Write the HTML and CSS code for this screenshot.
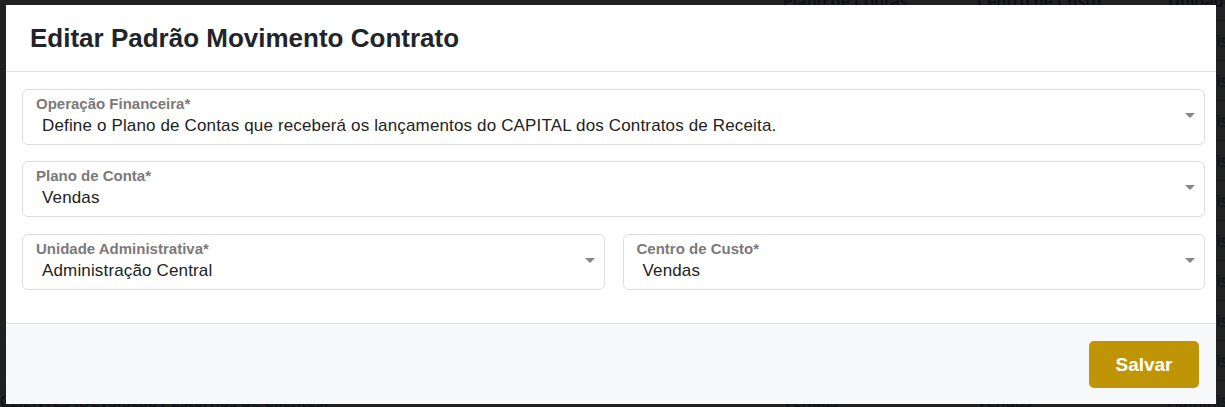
FILE: index.html
```html
<!DOCTYPE html>
<html lang="pt-BR">
<head>
<meta charset="utf-8">
<title>Editar Padrão Movimento Contrato</title>
<link rel="stylesheet" href="styles.css">
</head>
<body>
<div class="backdrop">
  <div class="bg-row bg-head"><span class="bg-c1">Descrição</span><span>Plano de Contas</span><span>Centro de Custo</span><span>Unidade Administrativa</span></div>
  <div class="bg-row"><span class="bg-c1">Receita de Venda de Mercadoria</span><span>Vendas</span><span>Vendas</span><span>Administração Central</span></div>
  <div class="bg-row"><span class="bg-c1">Receita de Venda de Mercadoria</span><span>Vendas</span><span>Vendas</span><span>Administração Central</span></div>
  <div class="bg-row"><span class="bg-c1">Receita de Venda de Mercadoria</span><span>Vendas</span><span>Vendas</span><span>Administração Central</span></div>
  <div class="bg-row"><span class="bg-c1">Receita de Venda de Mercadoria</span><span>Vendas</span><span>Vendas</span><span>Administração Central</span></div>
  <div class="bg-row"><span class="bg-c1">Receita de Venda de Mercadoria</span><span>Vendas</span><span>Vendas</span><span>Administração Central</span></div>
  <div class="bg-row"><span class="bg-c1">Receita de Venda de Mercadoria</span><span>Vendas</span><span>Vendas</span><span>Administração Central</span></div>
  <div class="bg-row"><span class="bg-c1">Receita de Venda de Mercadoria</span><span>Vendas</span><span>Vendas</span><span>Administração Central</span></div>
  <div class="bg-row"><span class="bg-c1 bg-shift">Devolução de CLIENTES (Devolução / Estornos de Clientes)</span><span>Vendas</span><span>Vendas</span><span>Administração Central</span></div>
  <div class="bg-row"><span class="bg-c1 bg-shift">Devolução de CLIENTES (Devolução / Estornos de Clientes)</span><span>Vendas</span><span>Vendas</span><span>Administração Central</span></div>
  <div class="bg-row"><span class="bg-c1 bg-shift2">Estorno de CLIENTES (Devolução / Estornos de Clientes)</span><span>Vendas</span><span>Vendas</span><span>Administração Central</span></div>
</div>

<div class="modal">
  <header class="modal-header">
    <h1 class="modal-title">Editar Padrão Movimento Contrato</h1>
  </header>
  <div class="modal-body">
    <div class="field">
      <div class="field-text">
        <span class="field-label">Operação Financeira*</span>
        <span class="field-value">Define o Plano de Contas que receberá os lançamentos do CAPITAL dos Contratos de Receita.</span>
      </div>
      <span class="caret"></span>
    </div>
    <div class="field">
      <div class="field-text">
        <span class="field-label">Plano de Conta*</span>
        <span class="field-value">Vendas</span>
      </div>
      <span class="caret"></span>
    </div>
    <div class="field-row">
      <div class="field">
        <div class="field-text">
          <span class="field-label">Unidade Administrativa*</span>
          <span class="field-value">Administração Central</span>
        </div>
        <span class="caret"></span>
      </div>
      <div class="field">
        <div class="field-text">
          <span class="field-label">Centro de Custo*</span>
          <span class="field-value">Vendas</span>
        </div>
        <span class="caret"></span>
      </div>
    </div>
  </div>
  <footer class="modal-footer">
    <button class="btn-save" type="button">Salvar</button>
  </footer>
</div>
</body>
</html>
```

FILE: styles.css
```css
html, body {
  margin: 0;
  height: 100%;
}

body {
  position: relative;
  overflow: hidden;
  background: #212121;
  font-family: "Liberation Sans", Arial, sans-serif;
}

/* dimmed page behind the dialog */
.backdrop {
  margin-top: -19px;
  font-family: "Open Sans", "Noto Sans", sans-serif;
  font-size: 16px;
  color: #0b0e15;
}

.bg-row {
  display: grid;
  grid-template-columns: 783px 194px 191px 1fr;
  height: 39px;
  align-items: center;
  white-space: nowrap;
  border-bottom: 1px solid #1d1d1d;
}

.bg-head {
  font-weight: 600;
}

.bg-c1 {
  text-indent: -250px;
  overflow: hidden;
}

.bg-shift {
  text-indent: -470px;
}

.bg-shift2 {
  text-indent: -85px;
}

/* dialog */
.modal {
  position: absolute;
  left: 6px;
  top: 5px;
  width: 1210px;
  height: 399px;
  background: #ffffff;
  display: flex;
  flex-direction: column;
}

.modal-header {
  height: 66px;
  border-bottom: 1px solid #dee2e6;
  display: flex;
  align-items: center;
  padding: 0 24px;
  flex: none;
}

.modal-title {
  margin: 0;
  font-size: 26px;
  line-height: 30px;
  font-weight: 700;
  color: #212529;
}

.modal-body {
  flex: 1;
  padding: 17px 11px 0 16px;
  display: flex;
  flex-direction: column;
  gap: 16px;
}

.field-row {
  display: grid;
  grid-template-columns: 1fr 1fr;
  gap: 18px;
  margin-top: 1px;
}

.field {
  height: 56px;
  box-sizing: border-box;
  border: 1px solid #dcdcdc;
  border-radius: 6px;
  display: flex;
  align-items: flex-start;
  padding: 5px 9px 0 13px;
  min-width: 0;
}

.field-text {
  flex: 1;
  display: flex;
  flex-direction: column;
  gap: 3px;
  min-width: 0;
}

.field-label {
  font-size: 15px;
  line-height: 18px;
  font-weight: 700;
  color: #7a7a7a;
}

.field-value {
  padding-left: 6px;
  font-size: 17px;
  line-height: 20px;
  letter-spacing: 0.15px;
  color: #222222;
  white-space: nowrap;
}

.caret {
  flex: none;
  width: 0;
  height: 0;
  margin-top: 18px;
  border-left: 5px solid transparent;
  border-right: 5px solid transparent;
  border-top: 5px solid #858585;
}

.modal-footer {
  flex: none;
  height: 81px;
  box-sizing: border-box;
  border-top: 1px solid #dee2e6;
  background: #f8f9fa;
  display: flex;
  justify-content: flex-end;
  align-items: flex-start;
  padding: 17px 17px 0;
}

.btn-save {
  width: 110px;
  height: 47px;
  border: none;
  border-radius: 5px;
  background: #c09505;
  color: #ffffff;
  font-family: "Liberation Sans", Arial, sans-serif;
  font-size: 19px;
  font-weight: 700;
  cursor: pointer;
}
```
